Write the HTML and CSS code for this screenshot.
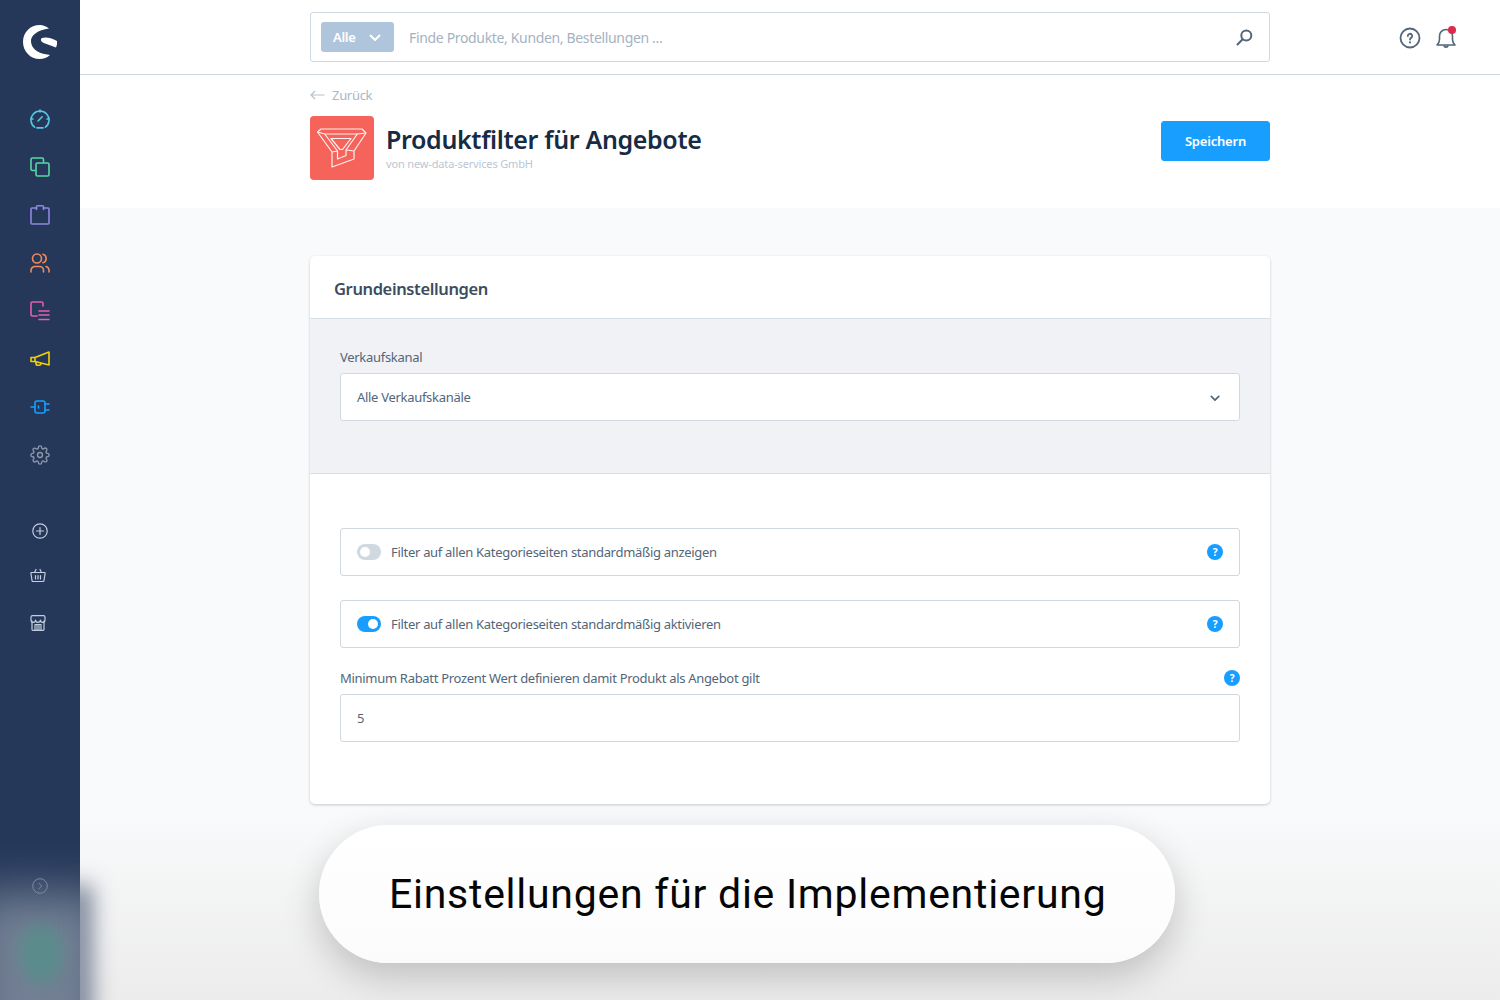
FILE: index.html
```html
<!DOCTYPE html>
<html lang="de">
<head>
<meta charset="utf-8">
<title>Produktfilter für Angebote</title>
<link rel="stylesheet" href="styles.css">
</head>
<body>
<div class="app">
  <nav class="sidebar">
    <div class="logo">
      <svg width="34" height="34" viewBox="0 0 34 34"><path class="logo-mark" d="M26 3.500C23 1.200 20 0 17 0 7 0 0 7.500 0 17c0 9.500 7.500 17 16.500 17 4 0 8-1.500 10.500-4C21 29 9 27.500 8 16.500 7.500 10 15 5 26 3.500z"/><path class="logo-mark" d="M19 13c4-1.500 11 .5 15 3 .3 2 0 4-1 6.500-5-2-12-4-14-5.500-1.500-1.500-1.500-3 0-4z"/></svg>
    </div>
    <div class="nav-group">
      <a class="nav-item"><svg class="ico" viewBox="0 0 20 20" stroke="#57c7e3"><path d="M4.600 18.200A9 9 0 1 1 15.400 18.200"/><path d="M7 18.900h6"/><path d="M8 12 12.200 7.800"/><path d="M10 1v2M1 10h2M17 10h2"/></svg></a>
      <a class="nav-item"><svg class="ico" viewBox="0 0 20 20" stroke="#57d9a3"><path d="M5 13.500H2.500a1.500 1.500 0 0 1-1.500-1.500V2.500A1.500 1.500 0 0 1 2.500 1H12a1.500 1.500 0 0 1 1.500 1.500V5"/><rect x="6" y="6" width="13" height="13" rx="1.500"/></svg></a>
      <a class="nav-item"><svg class="ico" viewBox="0 0 20 20" stroke="#8f86e0"><path d="M6.500 3H2a1 1 0 0 0-1 1v14a1 1 0 0 0 1 1h16a1 1 0 0 0 1-1V4a1 1 0 0 0-1-1h-4.500"/><path d="M6.500 4.500V1.800a1 1 0 0 1 1-1h5a1 1 0 0 1 1 1v2.700"/></svg></a>
      <a class="nav-item"><svg class="ico" viewBox="0 0 20 20" stroke="#f08a5d"><circle cx="7" cy="5.500" r="4.500"/><path d="M1 19v-1.500a4 4 0 0 1 4-4h4.500a4 4 0 0 1 4 4V19"/><path d="M13 1.200a4.500 4.500 0 0 1 0 8.600"/><path d="M16 13.500a4 4 0 0 1 3 3.500v2"/></svg></a>
      <a class="nav-item"><svg class="ico" viewBox="0 0 20 20" stroke="#e85cb0"><path d="M7 15H2.500A1.500 1.500 0 0 1 1 13.500v-11A1.500 1.500 0 0 1 2.500 1h9A1.500 1.500 0 0 1 13 2.500V5"/><path d="M9 10h10M9 14h10M9 18.500h10"/></svg></a>
      <a class="nav-item"><svg class="ico" viewBox="0 0 20 20" stroke="#f5d000"><path d="M5 8.500 19 3v13L5 12.500z"/><path d="M5 8.500H1v4h4"/><path d="M6 13v1.500a1.800 1.800 0 0 0 1.800 1.800h1.400a1.800 1.800 0 0 0 1.800-1.800v-.3"/></svg></a>
      <a class="nav-item"><svg class="ico" viewBox="0 0 20 20" stroke="#189eff"><rect x="5" y="4" width="10" height="12" rx="2"/><path d="M1 10h4M15 7h4M15 13h4M8.500 9v2"/></svg></a>
      <a class="nav-item"><svg class="ico" viewBox="0 0 24 24" stroke="#8d99ab"><circle cx="12" cy="12" r="3"/><path d="M19.400 15a1.650 1.650 0 0 0 .33 1.820l.06.06a2 2 0 0 1 0 2.830 2 2 0 0 1-2.830 0l-.06-.06a1.650 1.650 0 0 0-1.820-.33 1.650 1.650 0 0 0-1 1.510V21a2 2 0 0 1-2 2 2 2 0 0 1-2-2v-.09A1.650 1.650 0 0 0 9 19.400a1.650 1.650 0 0 0-1.820.33l-.06.06a2 2 0 0 1-2.830 0 2 2 0 0 1 0-2.830l.06-.06a1.650 1.650 0 0 0 .33-1.820 1.650 1.650 0 0 0-1.510-1H3a2 2 0 0 1-2-2 2 2 0 0 1 2-2h.09A1.650 1.650 0 0 0 4.600 9a1.650 1.650 0 0 0-.33-1.820l-.06-.06a2 2 0 0 1 0-2.830 2 2 0 0 1 2.830 0l.06.06a1.650 1.650 0 0 0 1.820.33H9a1.650 1.650 0 0 0 1-1.510V3a2 2 0 0 1 2-2 2 2 0 0 1 2 2v.09a1.650 1.650 0 0 0 1 1.510 1.650 1.650 0 0 0 1.820-.33l.06-.06a2 2 0 0 1 2.830 0 2 2 0 0 1 0 2.830l-.06.06a1.650 1.650 0 0 0-.33 1.820V9a1.650 1.650 0 0 0 1.510 1H21a2 2 0 0 1 2 2 2 2 0 0 1-2 2h-.09a1.650 1.650 0 0 0-1.510 1z"/></svg></a>
    </div>
    <div class="nav-group nav-group-second">
      <a class="nav-item"><svg class="ico ico-sm" viewBox="0 0 16 16" stroke="#c3cede"><circle cx="8" cy="8" r="7.200"/><path d="M8 4.500v7M4.500 8h7"/></svg></a>
      <a class="nav-item nav-item-shift"><svg class="ico ico-sm" viewBox="0 0 16 14" stroke="#c3cede"><path d="M1 4.500h14v1.500l-1 6.500a1 1 0 0 1-1 1H3a1 1 0 0 1-1-1L1 6z"/><path d="M4.500 4.500 6 1.500M11.500 4.500 10 1.500M5.500 7.500v3.500M8 7.500v3.500M10.500 7.500v3.500"/></svg></a>
      <a class="nav-item nav-item-shift"><svg class="ico ico-sm" viewBox="0 0 16 16" stroke="#c3cede"><path d="M2 6v8.500a.800.800 0 0 0 .8.800h10.400a.800.800 0 0 0 .8-.8V6"/><path d="M1 5V2.200A1.500 1.500 0 0 1 2.500.7h11A1.500 1.500 0 0 1 15 2.200V5a2.300 2.300 0 0 1-4.600 0 2.400 2.400 0 0 1-4.800 0A2.300 2.300 0 0 1 1 5z"/><path d="M5 15V9.500h6V15M7 9.500V15M9 9.500V15"/></svg></a>
    </div>
  </nav>

  <main class="main">
    <header class="topbar">
      <div class="search">
        <span class="search-type">Alle<svg width="12" height="8" viewBox="0 0 12 8"><path d="M1.500 1.500 6 6l4.500-4.500"/></svg></span>
        <span class="search-hint">Finde Produkte, Kunden, Bestellungen ...</span>
        <svg class="search-glass" width="17" height="17" viewBox="0 0 17 17"><circle cx="10.300" cy="6.500" r="5"/><path d="M6.600 10.200 1.500 15.500"/></svg>
      </div>
      <div class="top-actions">
        <svg class="help" width="22" height="22" viewBox="0 0 22 22"><circle cx="11" cy="11" r="9.500"/><path d="M8.800 9a2.200 2.200 0 1 1 3.300 1.900c-.7.400-1.100.8-1.100 1.600"/><path class="dot-stroke" d="M11 15.200v.2"/></svg>
        <span class="bell-wrap">
          <svg class="bell" width="22" height="22" viewBox="0 0 22 22"><path d="M2 18c1.500-1.500 2.500-3 2.500-5.500V9a6.500 6.500 0 0 1 13 0v3.500c0 2.500 1 4 2.500 5.500z"/><path d="M8.800 18.500a2.300 2.300 0 0 0 4.400 0"/></svg>
          <span class="bell-dot"></span>
        </span>
      </div>
    </header>

    <section class="title-band">
      <div class="band-inner">
        <a class="back"><svg width="15" height="10" viewBox="0 0 15 10"><path d="M14.500 5H1M5 1 1 5l4 4"/></svg>Zurück</a>
        <div class="title-row">
          <div class="app-icon">
            <svg width="50" height="42" viewBox="0 0 50 42"><g class="funnel"><path d="M.5 5 4 2H45L49 6 37 24V32L15 40V25z"/><path d="M7.700 7H40.300L29 23v5.500L20.500 32V24z"/><path d="M14 11.500H34L25.500 22.500H23z"/><path d="M.5 5 7.700 7M49 6 40.300 7M15 25l5.500-1M37 24l-8-1"/></g></svg>
          </div>
          <div class="title-text">
            <h1>Produktfilter für Angebote</h1>
            <p>von new-data-services GmbH</p>
          </div>
          <button class="save">Speichern</button>
        </div>
      </div>
    </section>

    <section class="content">
      <div class="card">
        <h2 class="card-title">Grundeinstellungen</h2>
        <div class="card-grey">
          <label class="field-label">Verkaufskanal</label>
          <div class="input select">Alle Verkaufskanäle
            <svg width="10" height="7" viewBox="0 0 12 8"><path d="M1.500 1.500 6 6l4.500-4.500"/></svg>
          </div>
        </div>
        <div class="card-body">
          <div class="input switch-row">
            <span class="switch"></span>
            <span class="switch-text">Filter auf allen Kategorieseiten standardmäßig anzeigen</span>
            <span class="hint">?</span>
          </div>
          <div class="input switch-row">
            <span class="switch on"></span>
            <span class="switch-text">Filter auf allen Kategorieseiten standardmäßig aktivieren</span>
            <span class="hint">?</span>
          </div>
          <div class="label-row">
            <label class="field-label">Minimum Rabatt Prozent Wert definieren damit Produkt als Angebot gilt</label>
            <span class="hint">?</span>
          </div>
          <div class="input">5</div>
        </div>
      </div>
    </section>
  </main>
</div>

<!-- soft haze along the lower edge, beneath the caption -->
<div class="haze"></div>
<div class="edge-clip"><div class="side-shade"></div></div>
<div class="side-clip"><div class="side-glow"></div><div class="side-green"></div></div>
<a class="collapse"><svg width="16" height="16" viewBox="0 0 16 16"><circle cx="8" cy="8" r="7.300"/><path d="M6.700 5 9.700 8l-3 3"/></svg></a>
<div class="caption">Einstellungen für die Implementierung</div>
</body>
</html>
```
FILE: styles.css
```css
* { box-sizing: border-box; }
html, body { margin: 0; height: 1000px; overflow: hidden; }
body {
  font-family: "Noto Sans", "Open Sans", sans-serif;
  letter-spacing: -.3px;
  color: #52667a;
  background: #f9fafb;
  position: relative;
}
.app { display: flex; height: 1000px; }

/* Sidebar */
.sidebar {
  width: 80px;
  flex: none;
  background: #25385a;
  display: flex;
  flex-direction: column;
  align-items: center;
}
.logo { height: 84px; padding-top: 25px; line-height: 0; }
.logo-mark { fill: #fff; }
.nav-group { display: flex; flex-direction: column; width: 100%; padding-top: 11px; }
.nav-group-second { padding-top: 30px; }
.nav-item { height: 48px; display: flex; align-items: center; justify-content: center; }
.nav-item-shift { padding-right: 4px; }
.ico { width: 20px; height: 20px; fill: none; stroke-width: 1.600; stroke-linecap: round; stroke-linejoin: round; }
.ico-sm { width: 16px; height: 16px; stroke-width: 1.200; }
.nav-group-second .nav-item { height: 44px; }
.nav-group-second .nav-item:last-child { height: 52px; }

/* Main column */
.main { flex: 1; min-width: 0; display: flex; flex-direction: column; }
.topbar {
  height: 75px;
  background: #fff;
  border-bottom: 1px solid #d1d9e0;
  display: flex;
  align-items: flex-start;
  padding: 12px 0 0 230px;
}
.search {
  width: 960px;
  height: 50px;
  border: 1px solid #d1d9e0;
  border-radius: 3px;
  display: flex;
  align-items: center;
  padding: 0 16px 0 10px;
}
.search-type {
  width: 73px;
  height: 30px;
  background: #afc5dc;
  border-radius: 3px;
  color: #fff;
  font-size: 13px;
  font-weight: 600;
  display: flex;
  align-items: center;
  justify-content: space-between;
  padding: 0 13px 0 12px;
}
.search-type svg, .select svg { fill: none; stroke-width: 2; stroke-linecap: round; stroke-linejoin: round; }
.search-type svg { stroke: #fff; margin-top: 2px; }
.search-hint { margin-left: 15px; flex: 1; font-size: 14px; letter-spacing: -.34px; color: #a5b2c2; }
.search-glass { fill: none; stroke: #52667a; stroke-width: 2; stroke-linecap: round; }
.top-actions { display: flex; gap: 14px; margin-left: 129px; padding-top: 15px; }
.help { fill: none; stroke: #52667a; stroke-width: 1.800; stroke-linecap: round; }
.dot-stroke { stroke-width: 2; }
.bell-wrap { position: relative; line-height: 0; display: block; }
.bell { fill: none; stroke: #52667a; stroke-width: 1.600; stroke-linejoin: round; }
.bell-dot { position: absolute; width: 8px; height: 8px; border-radius: 50%; background: #de294c; right: 1px; top: -1px; }

.title-band { background: #fff; height: 133px; }
.band-inner { width: 960px; margin-left: 230px; padding-top: 11px; }
.back { display: flex; align-items: center; gap: 7px; height: 18px; font-size: 13px; color: #a9b6c5; }
.back svg { fill: none; stroke: #b5c1cf; stroke-width: 1.200; }
.title-row { display: flex; align-items: flex-start; margin-top: 12px; }
.app-icon {
  width: 64px;
  height: 64px;
  border-radius: 4px;
  background: #f5635a;
  display: flex;
  align-items: center;
  justify-content: center;
}
.funnel { fill: none; stroke: #fff; stroke-width: 1.200; stroke-linejoin: round; opacity: .92; }
.title-text { flex: 1; margin-left: 12px; padding-top: 6px; }
h1 { margin: 0; font-size: 25px; letter-spacing: -.35px; line-height: 34px; font-weight: 600; color: #172b45; }
.title-text p { margin: 1px 0 0; font-size: 11px; letter-spacing: -.15px; line-height: 14px; color: #bcc6d2; }
.save {
  width: 109px;
  height: 40px;
  margin-top: 5px;
  border: 1px solid #189eff;
  border-radius: 3px;
  background: #189eff;
  color: #fff;
  font: 600 13px "Noto Sans", sans-serif;
  letter-spacing: -.2px;
  padding: 0;
}

/* Settings card */
.content { padding: 48px 0 0 230px; }
.card {
  width: 960px;
  height: 548px;
  background: #fff;
  border-radius: 5px;
  box-shadow: 0 1px 3px rgba(0, 0, 0, .2);
  overflow: hidden;
}
.card-title {
  margin: 0;
  height: 63px;
  padding: 19px 24px 0;
  font-size: 16.500px;
  letter-spacing: -.38px;
  line-height: 28px;
  font-weight: 600;
  color: #3d4c5c;
  border-bottom: 1px solid #d9dfe6;
}
.card-grey {
  height: 155px;
  background: #f0f2f5;
  border-bottom: 1px solid #d9dfe6;
  padding: 29px 30px 0;
}
.field-label { display: block; font-size: 13px; line-height: 18px; color: #52667a; }
.input {
  height: 48px;
  background: #fff;
  border: 1px solid #d1d9e0;
  border-radius: 3px;
  display: flex;
  align-items: center;
  padding: 0 16px;
  font-size: 13px;
  color: #52667a;
}
.card-grey .input { margin-top: 7px; }
.select { justify-content: space-between; }
.select svg { stroke: #52667a; margin: 2px 3px 0 0; }
.card-body { padding: 54px 30px 0; }
.switch-row { margin-bottom: 24px; }
.switch { width: 24px; height: 16px; border-radius: 8px; background: #d1d9e0; position: relative; flex: none; }
.switch::after { content: ""; position: absolute; width: 10px; height: 10px; border-radius: 50%; background: #fff; top: 3px; left: 3px; }
.switch.on { background: #189eff; }
.switch.on::after { left: 11px; }
.switch-text { flex: 1; margin-left: 10px; }
.hint {
  width: 16px;
  height: 16px;
  border-radius: 50%;
  background: #189eff;
  color: #fff;
  font-size: 10px;
  font-weight: 700;
  line-height: 16px;
  text-align: center;
  flex: none;
}
.label-row { display: flex; justify-content: space-between; align-items: center; margin: -3px 0 7px; }

/* Caption and haze */
.haze {
  position: absolute;
  left: 80px;
  right: 0;
  bottom: 0;
  height: 190px;
  background: linear-gradient(to bottom, rgba(236, 236, 236, 0), #ececec);
  pointer-events: none;
}
.edge-clip {
  position: absolute;
  left: 40px;
  top: 820px;
  width: 100px;
  height: 180px;
  overflow: hidden;
}
.side-shade {
  position: absolute;
  left: 26px;
  top: 65px;
  width: 26px;
  height: 170px;
  background: rgba(37, 56, 90, .6);
  filter: blur(11px);
}
.side-clip {
  position: absolute;
  left: 0;
  top: 820px;
  width: 80px;
  height: 180px;
  overflow: hidden;
}
.side-glow {
  position: absolute;
  left: -30px;
  top: 72px;
  width: 140px;
  height: 170px;
  background: rgba(200, 205, 212, .48);
  filter: blur(24px);
}
.side-green {
  position: absolute;
  left: 19px;
  top: 104px;
  width: 44px;
  height: 60px;
  border-radius: 50%;
  background: #54908a;
  opacity: .8;
  filter: blur(8px);
}
.collapse { position: absolute; left: 32px; top: 878px; line-height: 0; }
.collapse svg { fill: none; stroke: #7c8aa0; stroke-width: 1; }
.caption {
  position: absolute;
  left: 319px;
  top: 825px;
  width: 856px;
  height: 138px;
  border-radius: 69px;
  background: linear-gradient(to bottom, #fff, #fbfbfb);
  box-shadow: 0 14px 36px rgba(0, 0, 0, .2);
  font-family: Roboto, sans-serif;
  font-size: 41px;
  letter-spacing: .73px;
  color: #050505;
  line-height: 138px;
  padding-left: 70px;
  white-space: nowrap;
}
```
